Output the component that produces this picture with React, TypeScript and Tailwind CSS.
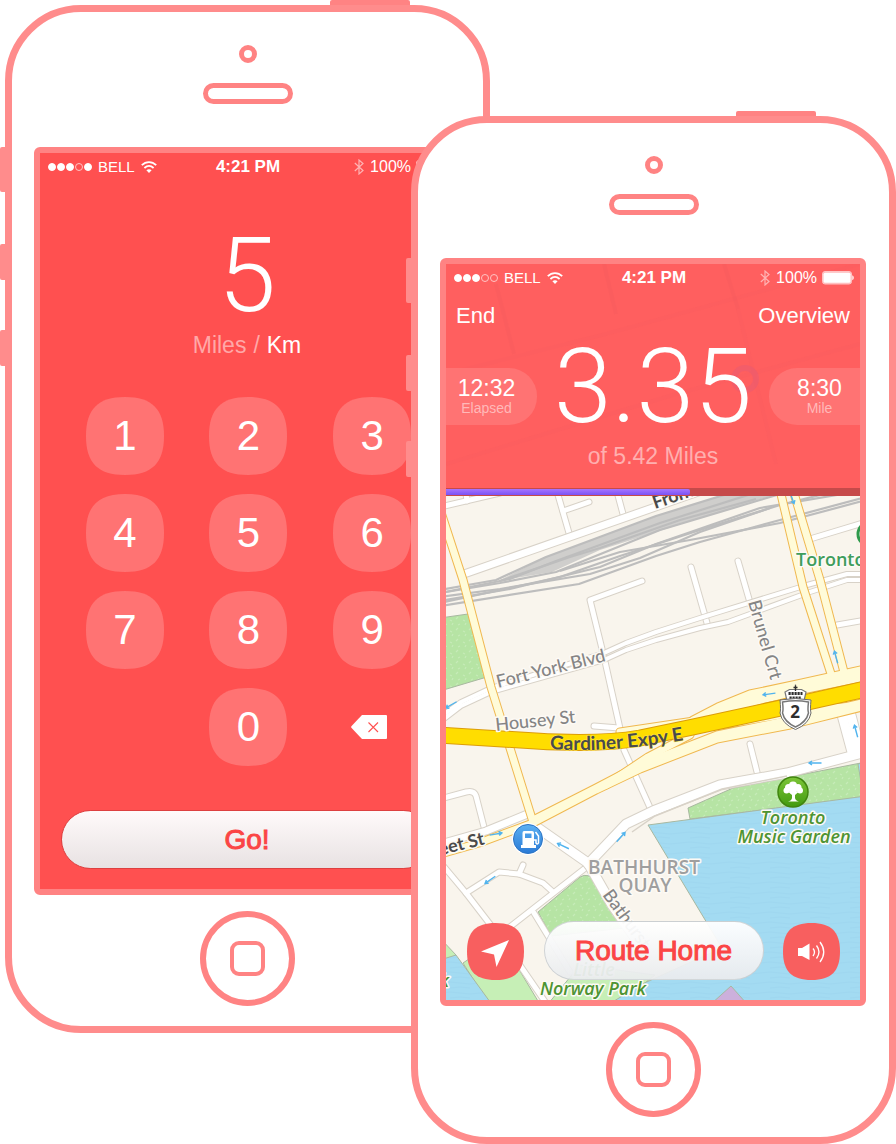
import React from "react";

const SANS = "font-['Liberation_Sans',Arial,sans-serif]";

/* ---------- Shared drawings ---------- */

function Squircle({ className }: { className: string }) {
  return (
    <svg viewBox="0 0 78 78" aria-hidden="true" className={"absolute inset-0 h-full w-full " + className}>
      <path
        fill="currentColor"
        d="M39 0C66 0 78 12 78 39C78 66 66 78 39 78C12 78 0 66 0 39C0 12 12 0 39 0Z"
      />
    </svg>
  );
}

function WifiIcon() {
  return (
    <svg viewBox="0 0 16 12" className="h-3 w-4" aria-hidden="true" fill="none" stroke="white" strokeWidth="1.8">
      <path d="M.8 4.2C5 0 11 0 15.2 4.2" />
      <path d="M3.4 7C6.2 4.4 9.8 4.4 12.6 7" />
      <path d="M8 12L5.4 9.3C7 7.9 9 7.9 10.6 9.3Z" fill="white" stroke="none" />
    </svg>
  );
}

function BluetoothIcon() {
  return (
    <svg viewBox="0 0 10 16" className="h-4 w-[10px]" aria-hidden="true" fill="none" stroke="#ffb3b3" strokeWidth="1.2">
      <path d="M.8 4L9 11.5L5 15V1L9 4.5L.8 12" />
    </svg>
  );
}

function BatteryIcon() {
  return (
    <svg viewBox="0 0 32 14" className="h-[14px] w-8" aria-hidden="true">
      <rect x=".5" y=".5" width="29" height="12.5" rx="2.5" fill="#ffb9b9" stroke="#ffc4c4" />
      <rect x="1.5" y="1.8" width="27" height="10" rx="1.5" fill="white" />
      <path d="M30.3 4.3C32.2 5 32.2 8.6 30.3 9.3Z" fill="white" />
    </svg>
  );
}

function StatusBar({ signal }: { signal: boolean[] }) {
  return (
    <div className="grid grid-cols-[1fr_auto_1fr] items-center pt-px pr-[6px] pl-2 text-[16px] leading-[26px] text-white">
      <div className="flex items-center">
        <div className="flex gap-px">
          {signal.map((on, i) => (
            <span
              key={i}
              className={"size-2 rounded-full border " + (on ? "border-white bg-white" : "border-[#ffc4c4]")}
            />
          ))}
        </div>
        <span className="mr-[6px] ml-[6px] text-[15px]">BELL</span>
        <WifiIcon />
      </div>
      <span className="text-[17px] font-bold">4:21 PM</span>
      <div className="flex items-center justify-end">
        <BluetoothIcon />
        <span className="mr-[5px] ml-[6px]">100%</span>
        <BatteryIcon />
      </div>
    </div>
  );
}

/* ---------- Phone shell ---------- */

function Phone({ label, className, children }: { label: string; className: string; children: React.ReactNode }) {
  return (
    <section
      aria-label={label}
      className={
        "relative flex min-w-0 flex-1 flex-col items-center rounded-[76px] border-[7px] border-[#ff8c8c] bg-white pt-[33px] pb-5 " +
        className
      }
    >
      <span className="absolute -top-3 right-[73px] h-[5px] w-20 rounded-t-[2px] bg-[#ff8383]" />
      <span className="absolute top-[135px] -left-3 h-[45px] w-[5px] rounded-l-[2px] bg-[#ff8c8c]" />
      <span className="absolute top-[232px] -left-3 h-9 w-[5px] rounded-l-[2px] bg-[#ff8c8c]" />
      <span className="absolute top-[318px] -left-3 h-9 w-[5px] rounded-l-[2px] bg-[#ff8c8c]" />
      <span className="size-[18px] rounded-full border-[5px] border-[#ff8383]" />
      <span className="mt-5 h-[21px] w-[90px] rounded-full border-[5px] border-[#ff8383]" />
      <div className="mt-[43px] w-full pr-[23px] pl-[22px]">
        <div className="overflow-hidden rounded-[6px] border-[6px] border-[#ff8383]">{children}</div>
      </div>
      <button
        type="button"
        aria-label="Home"
        className="mt-4 flex size-[95px] items-center justify-center rounded-full border-[6px] border-[#ff8383]"
      >
        <span className="size-[35px] rounded-[9px] border-4 border-[#ff8383]" />
      </button>
    </section>
  );
}

/* ---------- Distance entry ---------- */

function Key({ digit, className = "" }: { digit: string; className?: string }) {
  return (
    <button type="button" className={"relative size-[78px] text-[42px] leading-[78px] text-white " + className}>
      <Squircle className="text-[#ff7373]" />
      <span className="relative">{digit}</span>
    </button>
  );
}

function KeypadScreen() {
  return (
    <div className="flex h-[736px] flex-col bg-[#ff5050]">
      <StatusBar signal={[true, true, true, false, true]} />
      <div className="mt-9 text-center font-[Roboto,sans-serif] text-[104px] leading-[120px] font-light text-white">
        5
      </div>
      <div className="flex justify-center text-[23px] leading-[18px]">
        <button type="button" className="text-[#ffa8a8]">
          Miles
        </button>
        <span className="px-[7px] text-[#ffa8a8]">/</span>
        <button type="button" className="text-white">
          Km
        </button>
      </div>
      <div className="mt-[43px] grid grid-cols-3 gap-y-[19px] pr-5 pl-[23px]">
        {["1", "2", "3", "4", "5", "6", "7", "8", "9"].map((d) => (
          <Key key={d} digit={d} className="justify-self-center" />
        ))}
        <Key digit="0" className="col-start-2 justify-self-center" />
        <button type="button" aria-label="Delete" className="flex items-center justify-center pr-[6px]">
          <svg viewBox="0 0 36 24" className="h-6 w-9" aria-hidden="true">
            <path d="M11 0H35Q36 0 36 1V23Q36 24 35 24H11L.6 13Q-.3 12 .6 11Z" fill="white" />
            <path d="M17.5 7.5L27 17M27 7.5L17.5 17" stroke="#ff5050" strokeWidth="1.1" />
          </svg>
        </button>
      </div>
      <div className="mt-11 px-[21px]">
        <button
          type="button"
          className="h-[59px] w-full rounded-full border border-[#dd4040] bg-linear-to-b from-[#fffafa] to-[#e8e2e3] text-[28px] text-[#fb4545] [-webkit-text-stroke:1px_#fb4545]"
        >
          Go!
        </button>
      </div>
    </div>
  );
}

/* ---------- Map ---------- */

type RoadSet = { casing: string; fill: string; width: number; edge?: number; paths: string[] };

function Roads({ casing, fill, width, edge = 2, paths }: RoadSet) {
  return (
    <g fill="none" strokeLinejoin="round" strokeLinecap="round">
      {paths.map((d) => (
        <path key={"c" + d} d={d} stroke={casing} strokeWidth={width + edge} />
      ))}
      {paths.map((d) => (
        <path key={"f" + d} d={d} stroke={fill} strokeWidth={width} />
      ))}
    </g>
  );
}

const MINOR = [
  "M440 507L500 493",
  "M467 501L466 494",
  "M556 488L569 533",
  "M563 511L589 502",
  "M616 488L623 514",
  "M642 581L590 600L604 657L621 733",
  "M594 726L619 728",
  "M691 567L707 623",
  "M738 561L751 606",
  "M810 539L866 522",
  "M837 625L866 620",
  "M440 799L466 792Q474 790 476 796L484 827",
  "M624 750L652 812",
  "M440 862L466 893L506 945L548 1006",
  "M466 893L499 872L519 874L543 883L553 892",
  "M519 874L523 865",
  "M506 930L588 866",
  "M534 913L570 972",
  "M750 744L757 772",
];

const FORT_YORK = [
  "M440 717L461 702L491 688L604 653L626 643L656 632L703 617L807 585L847 574L866 574",
  "M440 722L461 706L491 692L604 660L626 650L656 640L700 628L728 622L810 592L847 580L866 580",
];

const QUAY = [
  "M588 864L626 824L653 811L720 785L787 773L866 752",
  "M538 828L588 863L612 905L640 945",
  "M838 700L852 752",
  "M847 700L860 750",
];

const RAILS = [
  "M440 590L496 580L546 557L656 516L740 490",
  "M440 593L510 579L556 561L660 523L770 488",
  "M440 593L500 583L556 572L660 530L760 500L800 488",
  "M500 581L570 557L600 548L680 520L756 499",
  "M440 603L560 577L620 556L700 530L780 505L840 490",
  "M440 601L510 589L600 567L656 544L760 508L866 490",
  "M560 571L620 552L690 540L780 523L870 499",
  "M440 597L500 589L590 574L640 558L700 532L770 508",
  "M440 606L579 584L656 556L700 542L780 520L870 496",
];

const ARROWS: [number, number, number][] = [
  [451, 705, 150],
  [792, 498, 70],
  [836, 657, 255],
  [769, 694, 172],
  [856, 731, 255],
  [496, 834, -10],
  [563, 846, 205],
  [621, 837, -48],
  [490, 880, 145],
  [815, 763, 180],
];

function CityMap() {
  return (
    <svg
      viewBox="446 496 414 504"
      preserveAspectRatio="xMidYMid slice"
      role="img"
      aria-label="Route map"
      className="absolute inset-0 h-full w-full"
    >
      <defs>
        <pattern id="grass" width="13" height="11" patternUnits="userSpaceOnUse">
          <rect width="13" height="11" fill="#b6e4a4" />
          <path d="M1 3l2-2M8 4l2 1M3 9l2-1M10 9l1-2" stroke="#c6ebb8" strokeWidth="1.2" />
        </pattern>
        <pattern id="waves" width="40" height="10" patternUnits="userSpaceOnUse">
          <rect width="40" height="10" fill="#a3dbf2" />
          <path d="M0 3Q10 1 20 3T40 3M10 8Q20 6 30 8" stroke="#9fd7f0" strokeWidth="1" fill="none" />
        </pattern>
        <linearGradient id="pumpBlue" x1="0" y1="0" x2="0" y2="1">
          <stop offset="0" stopColor="#5cb1f2" />
          <stop offset="1" stopColor="#2a7ad6" />
        </linearGradient>
        <linearGradient id="treeGreen" x1="0" y1="0" x2="0" y2="1">
          <stop offset="0" stopColor="#7cc537" />
          <stop offset="1" stopColor="#429a10" />
        </linearGradient>
        <path id="gardinerLine" d="M550 749Q620 754 710 735" />
      </defs>

      <rect x="440" y="490" width="426" height="516" fill="#f9f5ed" />

      <g stroke="#a8b8a0" strokeWidth="1">
        <path d="M440 618L468 614L487 677L440 691Z" fill="url(#grass)" />
        <path d="M538 912L580 877Q588 872 598 882L625 928L551 936Z" fill="url(#grass)" />
        <path d="M440 938L456 955L440 964Z" fill="#c6efb6" />
        <path d="M463 963L500 938L541 1006H490Z" fill="#c6efb6" />
        <path d="M548 1004L580 965L655 975L616 1006Z" fill="#c6efb6" />
        <path d="M440 960L456 955L493 1006H440Z" fill="url(#waves)" />
        <path d="M688 808L733 788L866 762V797L690 819Z" fill="url(#grass)" />
        <path d="M648 825L866 796V1006H606L640 985L722 948Z" fill="url(#waves)" />
        <path d="M858 764L866 762V782H861Z" fill="url(#waves)" />
        <path d="M711 1004L731 986L747 1004Z" fill="#ccb0dc" />
      </g>

      <Roads casing="#d8d2c8" fill="#ffffff" width={5} paths={MINOR} />
      <Roads casing="#d8d2c8" fill="#ffffff" width={4} paths={FORT_YORK} />
      <path d="M498 581L546 557L656 516L740 490H790L700 518L600 550L552 572Z" fill="#bdbdbd" fillOpacity=".7" />
      <g fill="none" stroke="#bdbdbd" strokeWidth="2.2" strokeLinejoin="round">
        {RAILS.map((d) => (
          <path key={d} d={d} />
        ))}
      </g>
      <Roads casing="#d8d2c8" fill="#ffffff" width={7} paths={["M464 574L704 490"]} />
      <Roads casing="#d8d2c8" fill="#ffffff" width={9} paths={QUAY} />
      <path d="M632 832L655 816L722 789L787 776" fill="none" stroke="#d8d2c8" strokeWidth="1.5" />
      <Roads casing="#d8d2c8" fill="#ffffff" width={7} paths={["M440 844L486 831L530 813"]} />

      <Roads
        casing="#f0b850"
        fill="#fffbd8"
        width={7}
        paths={[
          "M436 497L463 580L491 687L533 822",
          "M780 490L803 587L833 680",
          "M793 490L820 580L845 676",
          "M690 735L648 757L606 785",
          "M866 706L820 708L740 722L700 728",
          "M620 732L694 721L718 714L750 703L802 690L870 676",
          "M693 720L718 707L750 694L802 683L870 668",
          "M694 721L718 711L750 699L802 687L870 671",
          "M870 705L790 725L717 739L640 769L596 790L533 823L479 843L440 854",
          "M870 701L790 720L717 735L640 765L596 788L533 820",
        ]}
      />
      <Roads
        casing="#dc9c08"
        fill="#ffdd00"
        width={15}
        paths={["M436 735L536 741Q600 745 640 738L693 727L790 706L870 688"]}
      />

      <g fill="none" stroke="#51b4ee" strokeWidth="1.4">
        {ARROWS.map(([x, y, r]) => (
          <path key={x + "-" + y} transform={`translate(${x} ${y}) rotate(${r})`} d="M-6.5 0H6M3-2L6 0L3 2" />
        ))}
      </g>

      <g
        className="font-[Lato,sans-serif]"
        fontSize="18"
        stroke="#fdfaf5"
        strokeWidth="3"
        strokeLinejoin="round"
        paintOrder="stroke"
      >
        <g fill="#858585" fontWeight="500">
          <text transform="translate(498 688) rotate(-14)">Fort York Blvd</text>
          <text transform="translate(496 731) rotate(-6)">Housey St</text>
          <text transform="translate(748 602) rotate(74)">Brunel Crt</text>
          <text transform="translate(602 895) rotate(54)">Bathurst</text>
        </g>
        <g fill="#4a4a4a" fontWeight="700">
          <text transform="translate(655 509) rotate(-19)">Front</text>
          <text transform="translate(434 857) rotate(-14)">reet St</text>
          <text stroke="#ffe94a" strokeWidth="1" fontSize="19">
            <textPath href="#gardinerLine">Gardiner Expy E</textPath>
          </text>
        </g>
        <g fontWeight="600" className="font-['Open_Sans',sans-serif]">
          <text x="796" y="566" fill="#3f9d5c">
            Toronto
          </text>
          <g fill="#9f9f9f" textAnchor="middle" fontSize="19">
            <text x="644" y="874">BATHHURST</text>
            <text x="645" y="892">QUAY</text>
          </g>
          <g fill="#4e9433" fontStyle="italic" textAnchor="middle">
            <text x="793" y="824">Toronto</text>
            <text x="794" y="843">Music Garden</text>
            <text x="594" y="976">Little</text>
            <text x="593" y="995">Norway Park</text>
            <text x="430" y="987">Park</text>
          </g>
        </g>
      </g>

      <circle cx="870" cy="534" r="12" fill="white" stroke="#2f9a4b" strokeWidth="3" />

      <g>
        <circle cx="528" cy="839" r="16" fill="white" />
        <circle cx="528" cy="839" r="14.5" fill="url(#pumpBlue)" stroke="#2c74c4" />
        <path
          fillRule="evenodd"
          fill="white"
          d="M524 831H532Q534 831 534 833V845H536V848H521V845H522.5V833Q522.5 831 524 831ZM525 833.5V838H531.5V833.5Z"
        />
        <path d="M534 840H536V843Q537.5 845 538.5 843V836L535.5 832" fill="none" stroke="white" strokeWidth="1.5" />
      </g>

      <g>
        <circle cx="793" cy="792" r="15" fill="url(#treeGreen)" stroke="#40850f" strokeWidth="1.5" />
        <g fill="white">
          <circle cx="793" cy="785.5" r="4" />
          <circle cx="788.5" cy="787.5" r="3.5" />
          <circle cx="798" cy="787.5" r="3.5" />
          <circle cx="786.5" cy="790.5" r="3" />
          <circle cx="800" cy="790.5" r="3" />
          <circle cx="793" cy="790" r="4" />
          <path d="M788 791.5L792 795V798Q791.5 800.5 788 801.5H799Q795.5 800.5 795 798V795L799 791.5Z" />
        </g>
      </g>

      <g>
        <path
          d="M795.5 684.5V689M787 701L785 692L789.5 689.5H801.5L806 692L804 701Z"
          fill="white"
          stroke="#777"
          strokeWidth="1.2"
        />
        <path d="M788.5 693.5H802.5M789.5 698H801.5" stroke="#2e2e2e" strokeWidth="3" strokeDasharray="2.2 .8" />
        <path d="M795.5 685.5V691M793.5 687.5H797.5" stroke="#2e2e2e" strokeWidth="1.3" />
        <path
          d="M780 700Q795.5 697 811 700Q810 710 811 713Q809 724 795.5 729.5Q782 724 780 713Q781 710 780 700Z"
          fill="white"
          stroke="#6b6b6b"
          strokeWidth="1"
        />
        <path
          d="M782.5 702Q795.5 699.5 808.5 702Q807.5 710 808.5 713Q806.5 722 795.5 727Q784.5 722 782.5 713Q783.5 710 782.5 702Z"
          fill="white"
          stroke="#777"
          strokeWidth="1.5"
        />
        <text
          x="795"
          y="718"
          textAnchor="middle"
          fontSize="17"
          fontWeight="700"
          fill="#2e2e2e"
          className="font-['Open_Sans',sans-serif]"
        >
          2
        </text>
      </g>
    </svg>
  );
}

/* ---------- Run tracking ---------- */

function HeaderTexture() {
  return (
    <svg
      viewBox="0 0 414 224"
      preserveAspectRatio="none"
      aria-hidden="true"
      className="absolute inset-0 h-full w-full"
      fill="none"
      stroke="#e85a60"
      strokeOpacity=".18"
      strokeWidth="4"
    >
      <path d="M50 20L68 90M158 0L170 50M278 0L292 45" />
      <path d="M0 110L160 70L414 0M0 200L230 130L414 80M292 45L330 200" strokeOpacity=".08" />
      <circle cx="299" cy="115" r="11" stroke="#d85a80" strokeOpacity=".3" strokeWidth="6" />
    </svg>
  );
}

function RunScreen() {
  return (
    <div className="flex flex-col">
      <header className="relative h-[224px] bg-[#ff5f5f] text-white">
        <HeaderTexture />
        <div className="relative">
          <StatusBar signal={[true, true, true, false, false]} />
          <div className="flex justify-between px-[10px] pt-3 text-[22px] leading-[26px]">
            <button type="button">End</button>
            <button type="button">Overview</button>
          </div>
          <div className="grid grid-cols-[1fr_auto_1fr] items-end pt-5">
            <div className="flex h-[57px] w-[91px] flex-col justify-center rounded-r-[28px] bg-[#ff7373] pr-[10px] text-center">
              <span className="text-[23px] leading-[22px]">12:32</span>
              <span className="text-[14px] leading-[18px] text-[#ffb9b9]">Elapsed</span>
            </div>
            <div className="font-[Roboto,sans-serif] text-[104px] leading-[76px] font-light">3.35</div>
            <div className="flex h-[57px] w-[91px] flex-col justify-center justify-self-end rounded-l-[28px] bg-[#ff7373] pl-[10px] text-center">
              <span className="text-[23px] leading-[22px]">8:30</span>
              <span className="text-[14px] leading-[18px] text-[#ffb9b9]">Mile</span>
            </div>
          </div>
          <p className="pt-[18px] text-center text-[23px] leading-[26px] text-[#ffafaf]">of 5.42 Miles</p>
        </div>
      </header>
      <div
        role="progressbar"
        aria-label="Distance"
        aria-valuenow={59}
        aria-valuemin={0}
        aria-valuemax={100}
        className="h-2 bg-[#c64a4a] py-px"
      >
        <div className="h-full w-[59%] rounded-r-[2px] bg-linear-to-b from-[#a873ff] to-[#7a52f4]" />
      </div>
      <div className="relative flex h-[504px] items-end justify-between overflow-hidden pr-5 pb-5 pl-[21px]">
        <CityMap />
        <button type="button" aria-label="Locate me" className="relative flex size-[57px] items-center justify-center">
          <Squircle className="text-[#f85f5f]" />
          <svg viewBox="0 0 30 30" className="relative size-[30px]" aria-hidden="true">
            <path d="M28 3L15.5 30L13 17.5L0 14.5Z" fill="white" />
          </svg>
        </button>
        <button
          type="button"
          className="relative h-[59px] w-[220px] rounded-full border border-[#b8bcc0]/60 bg-linear-to-b from-white/95 to-[#e9ebed]/95 text-[28px] text-[#fb4545] [-webkit-text-stroke:1px_#fb4545]"
        >
          Route Home
        </button>
        <button type="button" aria-label="Sound" className="relative flex size-[57px] items-center justify-center">
          <Squircle className="text-[#f85f5f]" />
          <svg viewBox="0 0 28 24" className="relative h-6 w-7" aria-hidden="true" fill="none" stroke="white" strokeWidth="1.3">
            <path d="M0 8H4L11.5 3.5V20L4 16H0Z" fill="white" stroke="none" />
            <path d="M15 8.5Q18 12 15 16" />
            <path d="M18.5 5.5Q23.5 12 18.5 18.5" />
            <path d="M22 2Q29.5 12 22 22" />
          </svg>
        </button>
      </div>
    </div>
  );
}

export default function App() {
  return (
    <main className={"flex items-start overflow-hidden bg-white pt-[5px] pl-[5px] " + SANS}>
      <Phone label="Choose distance" className="">
        <KeypadScreen />
      </Phone>
      <Phone label="Current run" className="mt-[111px] -ml-[79px]">
        <RunScreen />
      </Phone>
    </main>
  );
}
